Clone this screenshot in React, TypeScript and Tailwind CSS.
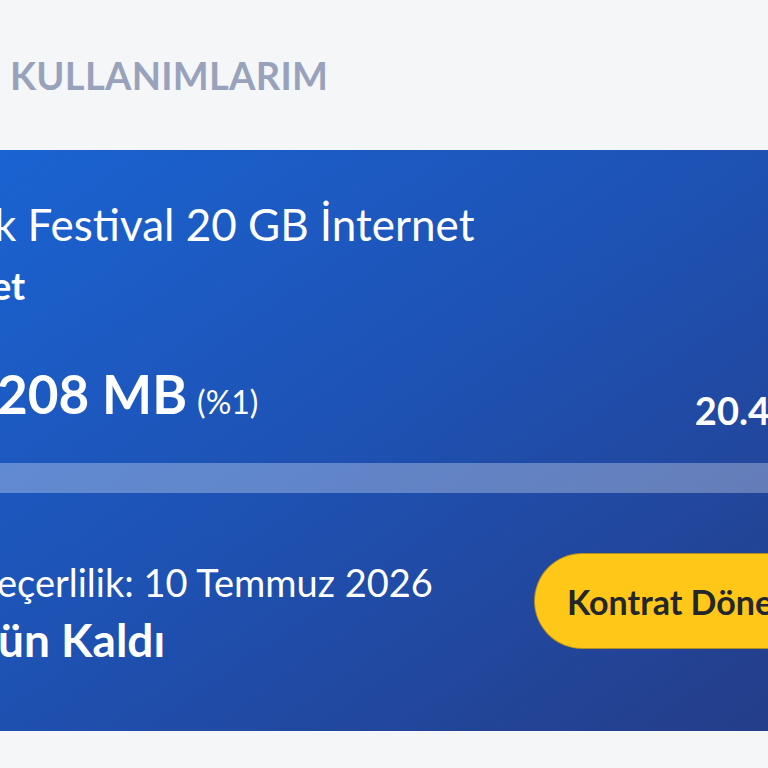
export default function App() {
  return (
    <div
      className="w-[768px] h-[768px] overflow-hidden bg-[#f5f6f8] flex flex-col"
      style={{ fontFamily: 'Lato, "Noto Sans", sans-serif' }}
    >
      <div className="h-[150px] pl-[10px] pt-[52px]">
        <h2 className="text-[38px] leading-[46px] font-bold text-[#99a2bc] tracking-[0.3px]">KULLANIMLARIM</h2>
      </div>

      <div className="h-[581px] -mr-[60px] bg-gradient-to-br from-[#1a63d2] via-[#1e50b0] to-[#243c86] text-white flex flex-col">
        <div className="pt-[48px]">
          <p className="-ml-[6px] text-[44px] leading-[52px] font-normal whitespace-nowrap">k Festival 20 GB İnternet</p>
          <p className="-ml-[9px] mt-[13px] text-[38px] leading-[44px] font-bold">et</p>
        </div>

        <div className="mt-[57px] flex items-end justify-between pr-[60px]">
          <p className="-ml-[3px] whitespace-nowrap leading-[60px]">
            <span className="text-[53px] font-bold">208 MB</span>
            <span className="ml-[10px] text-[32px] font-normal">(%1)</span>
          </p>
          <p className="-mr-[2px] mb-[8px] text-[38px] leading-[40px] font-bold">20.4</p>
        </div>

        <div className="mt-[25px] h-[30px] bg-white/30" />

        <div className="mt-[52px] flex items-start justify-between">
          <div className="pt-[14px]">
            <p className="-ml-[3px] text-[38px] leading-[46px] font-normal whitespace-nowrap">eçerlilik: 10 Temmuz 2026</p>
            <p className="-ml-[2px] mt-[8px] text-[46px] leading-[54px] font-bold whitespace-nowrap">ün Kaldı</p>
          </div>
          <button className="mt-[8px] w-[294px] h-[96px] rounded-full bg-[#ffc818] border border-[#3a3a2a]/40 text-[#23262b] text-[34px] font-bold text-left pl-[32px] whitespace-nowrap">
            Kontrat Döne
          </button>
        </div>
      </div>
    </div>
  );
}
